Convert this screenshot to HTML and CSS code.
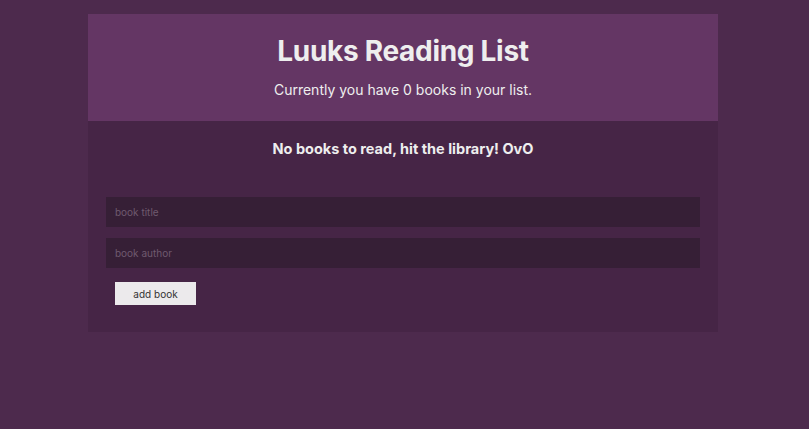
FILE: index.html
```
<!DOCTYPE html>
<html>
<head>
<meta charset="utf-8">
<link rel="stylesheet" href="styles.css">
</head>
<body>
<div class="app">
  <div class="navbar">
    <h1 class="title">Luuks Reading List</h1>
    <p class="count">Currently you have 0 books in your list.</p>
  </div>
  <div class="empty">No books to read, hit the library! OvO</div>
  <form class="form">
    <input class="field" type="text" placeholder="book title">
    <input class="field" type="text" placeholder="book author">
    <button class="submit" type="button">add book</button>
  </form>
</div>
</body>
</html>
```

FILE: styles.css
```
html, body {
  margin: 0;
  padding: 0;
}
body {
  background: #4d2a4d;
  font-family: Inter, "Noto Sans", sans-serif;
  color: #eee;
  height: 429px;
  overflow: hidden;
  padding-right: 3px;
  box-sizing: border-box;
}
.app {
  width: 630px;
  margin: 14px auto 0;
  background: #462546;
  box-sizing: border-box;
}
.navbar {
  background: #643664;
  text-align: center;
  padding: 21px 20px 23px;
  height: 107px;
  box-sizing: border-box;
}
.title {
  margin: 0;
  font-size: 28px;
  font-weight: 700;
  line-height: 32px;
  letter-spacing: -0.3px;
}
.count {
  margin: 13px 0 0;
  font-size: 14px;
  line-height: 20px;
}
.empty {
  text-align: center;
  font-size: 14.5px;
  font-weight: 700;
  padding: 18px 0 0;
  line-height: 20px;
}
.form {
  padding: 38px 18px 27px;
  display: flex;
  flex-direction: column;
  align-items: flex-start;
}
.field {
  width: 100%;
  box-sizing: border-box;
  height: 30px;
  border: 0;
  background: #361f36;
  color: #fff;
  padding: 0 9px;
  font-family: Inter, "Noto Sans", sans-serif;
  font-size: 10px;
  margin: 0 0 11px;
  outline: none;
}
.field::placeholder {
  color: #6f5a6f;
}
.submit {
  margin: 3px 0 0 9px;
  width: 81px;
  height: 23px;
  border: 0;
  background: #eceaec;
  color: #333;
  font-family: Inter, "Noto Sans", sans-serif;
  font-size: 10px;
  padding: 0;
}
```
